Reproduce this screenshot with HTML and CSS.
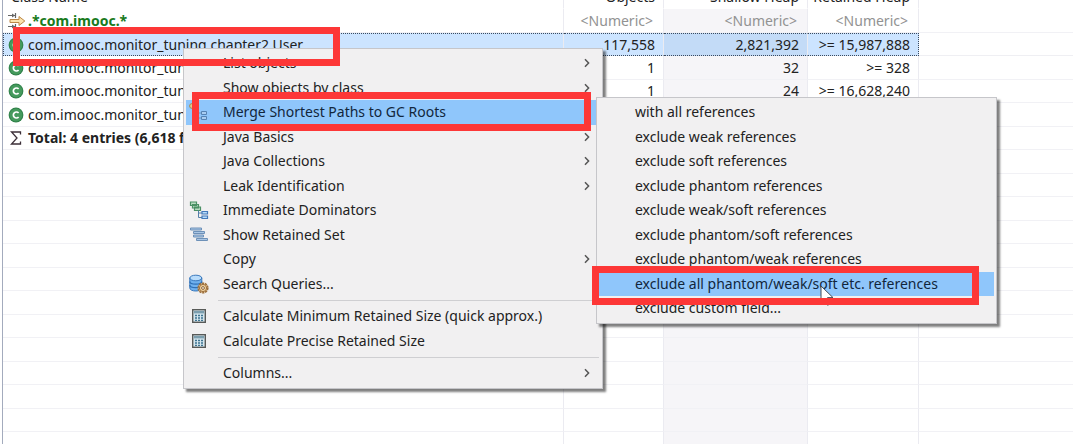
FILE: index.html
```
<!DOCTYPE html>
<html lang="en">
<head>
<meta charset="UTF-8">
<meta name="viewport" content="width=device-width, initial-scale=1.0">
<title>Heap Histogram</title>
<link rel="stylesheet" href="styles.css">
</head>
<body>
	<!-- shared icons -->
	<svg class="defs" width="0" height="0">
		<symbol id="class-icon" viewBox="0 0 16 16">
			<circle cx="8" cy="8" r="7.4" fill="#2f8049"/>
			<circle cx="8" cy="8" r="6.4" fill="#459a5d"/>
			<path d="M10.6 6A3 3 0 1 0 10.6 10" fill="none" stroke="#fff" stroke-width="1.7"/>
		</symbol>
		<symbol id="calc-icon" viewBox="0 0 16 16">
			<rect x="1.7" y="1.7" width="12.6" height="12.6" fill="#d5e6ee" stroke="#585a58" stroke-width="1.4"/>
			<rect x="3" y="3" width="10" height="2.4" fill="#7b9eae"/>
			<path d="M4 7.5h8M4 10h8M4 12.4h8" stroke="#3d7391" stroke-width="1.4" stroke-dasharray="2 1"/>
		</symbol>
		<symbol id="arrow-icon" viewBox="0 0 8 10">
			<path d="M2 1.2L5.6 5L2 8.8" fill="none" stroke="#555" stroke-width="1.5"/>
		</symbol>
	</svg>

	<main class="histogram">
		<table>
			<colgroup>
				<col class="col-name">
				<col class="col-objects">
				<col class="col-shallow">
				<col class="col-retained">
				<col>
			</colgroup>
			<thead>
				<tr><th>Class Name</th><th>Objects</th><th>Shallow Heap</th><th>Retained Heap</th><th></th></tr>
			</thead>
			<tbody>
				<tr class="filter">
					<td>
						<div class="name">
							<svg class="filter-icon" viewBox="0 0 18 18">
								<path d="M0 3.5h7M0 14.5h7M7.5 1v5M7.5 12v5" fill="none" stroke="#666" stroke-width="1.2"/>
								<path d="M4 1.5L7 3.5L4 5.5zM4 12.5L7 14.5L4 16.5z" fill="#666"/>
								<path d="M2 7.5h9V4.5L16.8 9L11 13.5v-3H2z" fill="#fbe3ad" stroke="#bd8745"/>
							</svg>
							<span>.*com.imooc.*</span>
						</div>
					</td>
					<td>&lt;Numeric&gt;</td><td>&lt;Numeric&gt;</td><td>&lt;Numeric&gt;</td><td></td>
				</tr>
				<tr class="selected">
					<td><div class="name"><svg class="icon"><use href="#class-icon"/></svg><span>com.imooc.monitor_tuning.chapter2.User</span></div></td>
					<td>117,558</td><td>2,821,392</td><td>&gt;= 15,987,888</td><td></td>
				</tr>
				<tr>
					<td><div class="name"><svg class="icon"><use href="#class-icon"/></svg><span>com.imooc.monitor_tuning</span></div></td>
					<td>1</td><td>32</td><td>&gt;= 328</td><td></td>
				</tr>
				<tr>
					<td><div class="name"><svg class="icon"><use href="#class-icon"/></svg><span>com.imooc.monitor_tuning</span></div></td>
					<td>1</td><td>24</td><td>&gt;= 16,628,240</td><td></td>
				</tr>
				<tr>
					<td><div class="name"><svg class="icon"><use href="#class-icon"/></svg><span>com.imooc.monitor_tuning</span></div></td>
					<td></td><td></td><td></td><td></td>
				</tr>
				<tr class="total">
					<td>
						<div class="name">
							<svg class="icon" viewBox="0 0 16 16"><path d="M12.5 4.5V2H3.5L9 8L3.5 14H12.5V11.5" fill="none" stroke="#3c2f38" stroke-width="1.3"/></svg>
							<span>Total: 4 entries (6,618 filtered)</span>
						</div>
					</td>
					<td></td><td></td><td></td><td></td>
				</tr>
				<tr><td></td><td></td><td></td><td></td><td></td></tr>
				<tr><td></td><td></td><td></td><td></td><td></td></tr>
				<tr><td></td><td></td><td></td><td></td><td></td></tr>
				<tr><td></td><td></td><td></td><td></td><td></td></tr>
				<tr><td></td><td></td><td></td><td></td><td></td></tr>
				<tr><td></td><td></td><td></td><td></td><td></td></tr>
				<tr><td></td><td></td><td></td><td></td><td></td></tr>
				<tr><td></td><td></td><td></td><td></td><td></td></tr>
				<tr><td></td><td></td><td></td><td></td><td></td></tr>
				<tr><td></td><td></td><td></td><td></td><td></td></tr>
				<tr><td></td><td></td><td></td><td></td><td></td></tr>
				<tr><td></td><td></td><td></td><td></td><td></td></tr>
				<tr><td></td><td></td><td></td><td></td><td></td></tr>
			</tbody>
		</table>
	</main>

	<div class="menu context-menu">
		<button type="button">List objects<svg class="arrow"><use href="#arrow-icon"/></svg></button>
		<button type="button">Show objects by class<svg class="arrow"><use href="#arrow-icon"/></svg></button>
		<button type="button" class="active">
			<svg class="item-icon" viewBox="0 0 20 20">
				<circle cx="3" cy="4" r="2.4" fill="#e2c98c" stroke="#a88b4f"/>
				<path d="M8 8v8h4M8 11h4" fill="none" stroke="#6d96bd"/>
				<path d="M12.5 9.5h5v3h-5zM12.5 14.5h5v3h-5z" fill="#a9cdf2" stroke="#5683b3"/>
			</svg>
			Merge Shortest Paths to GC Roots<svg class="arrow"><use href="#arrow-icon"/></svg>
		</button>
		<button type="button">Java Basics<svg class="arrow"><use href="#arrow-icon"/></svg></button>
		<button type="button">Java Collections<svg class="arrow"><use href="#arrow-icon"/></svg></button>
		<button type="button">Leak Identification<svg class="arrow"><use href="#arrow-icon"/></svg></button>
		<button type="button">
			<svg class="item-icon" viewBox="0 0 20 20">
				<path d="M1.5 2h6v3.5h-6zM3.5 4.5h6v3.5h-6zM5.5 7h6v3.5h-6z" fill="#b9dcc2" stroke="#4b9065" stroke-width="1.2"/>
				<path d="M9.5 10.5v7h4M9.5 13h4" fill="none" stroke="#557fa8"/>
				<path d="M13 11.5h5.5v2.5H13zM13 16h5.5v2.5H13z" fill="#b7dcfa" stroke="#4479ba" stroke-width="1.2"/>
			</svg>
			Immediate Dominators
		</button>
		<button type="button">
			<svg class="item-icon" viewBox="0 0 20 20">
				<path d="M1.5 3h11v2h-11zM4.5 6.5h11v2h-11zM4.5 10h10v2h-10zM7.5 13.5h11v2h-11z" fill="#a9c6e5" stroke="#6e91b8"/>
			</svg>
			Show Retained Set
		</button>
		<button type="button">Copy<svg class="arrow"><use href="#arrow-icon"/></svg></button>
		<button type="button">
			<svg class="item-icon" viewBox="0 0 20 20">
				<path d="M.8 4v10c0 4 12 4 12 0V4z" fill="#6fb0ee" stroke="#3978bd"/>
				<path d="M.8 7.5c0 3.5 12 3.5 12 0M.8 11c0 3.5 12 3.5 12 0" fill="none" stroke="#2f6fb5" stroke-width="1.2"/>
				<ellipse cx="6.8" cy="4" rx="6" ry="2.8" fill="#b9dcfb" stroke="#3978bd"/>
				<circle cx="14" cy="14" r="4.8" fill="#f0d2a0" stroke="#9c6f3d" stroke-width="1.6" stroke-dasharray="2.2 .8"/>
				<circle cx="14" cy="14" r="3.6" fill="#f0d2a0" stroke="#9c6f3d"/>
				<circle cx="14" cy="14" r="1.4" fill="#fff" stroke="#8c6336"/>
			</svg>
			Search Queries...
		</button>
		<hr>
		<button type="button"><svg class="item-icon calc"><use href="#calc-icon"/></svg>Calculate Minimum Retained Size (quick approx.)</button>
		<button type="button"><svg class="item-icon calc"><use href="#calc-icon"/></svg>Calculate Precise Retained Size</button>
		<hr>
		<button type="button">Columns...<svg class="arrow"><use href="#arrow-icon"/></svg></button>
	</div>

	<div class="menu submenu">
		<button type="button">with all references</button>
		<button type="button">exclude weak references</button>
		<button type="button">exclude soft references</button>
		<button type="button">exclude phantom references</button>
		<button type="button">exclude weak/soft references</button>
		<button type="button">exclude phantom/soft references</button>
		<button type="button">exclude phantom/weak references</button>
		<button type="button" class="active">exclude all phantom/weak/soft etc. references</button>
		<button type="button">exclude custom field...</button>
	</div>

	<svg class="cursor" viewBox="0 0 14 22">
		<path d="M1 1V17L4.8 13.5L7.5 20.2L10.2 19L7.5 12.6H13z" fill="#fff" stroke="#444a58"/>
	</svg>

	<div class="mark mark-class"></div>
	<div class="mark mark-merge"></div>
	<div class="mark mark-exclude"></div>
</body>
</html>
```
FILE: styles.css
```
* {
	box-sizing: border-box;
}

body {
	margin: 0;
	position: relative;
	height: 100vh;
	overflow: hidden;
	background-color: #fff;
	color: #222;
	font-family: "Noto Sans", "Open Sans", sans-serif;
	font-size: 14px;
	line-height: 20px;
}

.defs {
	position: absolute;
}

/* histogram table, scrolled a little past its header */
.histogram {
	margin-top: -14px;
	margin-left: 2px;
	border-left: 1px solid #a3abbd;
}

table {
	width: 100%;
	table-layout: fixed;
	border-collapse: separate;
	border-spacing: 0;
}

.col-name {
	width: 561px;
}

.col-objects {
	width: 100px;
}

.col-shallow {
	width: 144px;
}

.col-retained {
	width: 111px;
}

th,
td {
	height: 23px;
	padding: 0 8px 0 0;
	border-right: 1px solid #ebebf1;
	border-bottom: 1px solid #f1f1f5;
	text-align: right;
	font-weight: normal;
	line-height: 20px;
	white-space: nowrap;
}

th {
	border-bottom-color: #fff;
}

tbody tr:nth-child(odd) td {
	height: 24px;
}

th:first-child {
	padding-left: 8px;
	text-align: left;
}

td:first-child {
	padding: 0;
}

td:nth-child(3) {
	background-color: #f6f5f8;
}

td:last-child,
th:last-child {
	border-right: none;
}

.name {
	display: flex;
	align-items: center;
	gap: 4px;
	padding-left: 5px;
}

.icon {
	width: 16px;
	height: 16px;
}

.filter-icon {
	width: 18px;
	height: 18px;
}

.filter .name {
	gap: 2px;
}

.filter td {
	padding-right: 10px;
	color: #929292;
}

.filter span {
	color: #187a1c;
	font-weight: bold;
}

.total span {
	font-weight: bold;
}

.selected td {
	background-color: #cce4ff;
	border-top: 1px dotted #3b4a5e;
	border-bottom: 1px dotted #3b4a5e;
}

.selected td:first-child {
	border-left: 1px dotted #3b4a5e;
}

.selected td:first-child .name {
	padding-left: 4px;
}

.selected td:nth-child(3) {
	background-color: #c3dbf7;
}

.selected td:nth-child(4) {
	border-right: 1px dotted #3b4a5e;
}

.selected td:last-child {
	background-color: #fff;
	border-top: none;
	border-bottom: 1px solid #efeff3;
}

/* menus */
.menu {
	position: absolute;
	padding: 2px;
	background-color: #f1f0f1;
	border: 1px solid #c6c6ca;
	box-shadow: 3px 3px 2px rgba(0, 0, 0, 0.5);
}

.context-menu {
	top: 48px;
	left: 183px;
	width: 420px;
}

.submenu {
	top: 97px;
	left: 596px;
	width: 401px;
}

.menu button {
	display: flex;
	align-items: center;
	position: relative;
	width: 100%;
	height: 25px;
	padding: 0 9px 1px 36px;
	border: none;
	background: none;
	color: #222;
	font: inherit;
	text-align: left;
	white-space: nowrap;
}

.menu button:nth-of-type(even) {
	height: 24px;
	padding-bottom: 0;
}

.context-menu button {
	padding-left: 37px;
}

.menu button.active {
	background-color: #8fc6fb;
	color: #12263c;
}

.menu hr {
	height: 1px;
	margin: 4px 1px 3px 32px;
	border: none;
	background-color: #cfcfd2;
}

.item-icon {
	position: absolute;
	left: 3px;
	width: 20px;
	height: 20px;
}

.item-icon.calc {
	left: 5px;
	width: 16px;
	height: 16px;
}

.arrow {
	width: 8px;
	height: 10px;
	margin-left: auto;
}

.cursor {
	position: absolute;
	top: 285px;
	left: 820px;
	width: 14px;
	height: 22px;
}

/* red highlight frames */
.mark {
	position: absolute;
	height: 39px;
	border: 7px solid #fd3737;
	pointer-events: none;
}

.mark-class {
	top: 27px;
	left: 13px;
	width: 327px;
}

.mark-merge {
	top: 92px;
	left: 192px;
	width: 399px;
}

.mark-exclude {
	top: 266px;
	left: 592px;
	width: 387px;
}
```
